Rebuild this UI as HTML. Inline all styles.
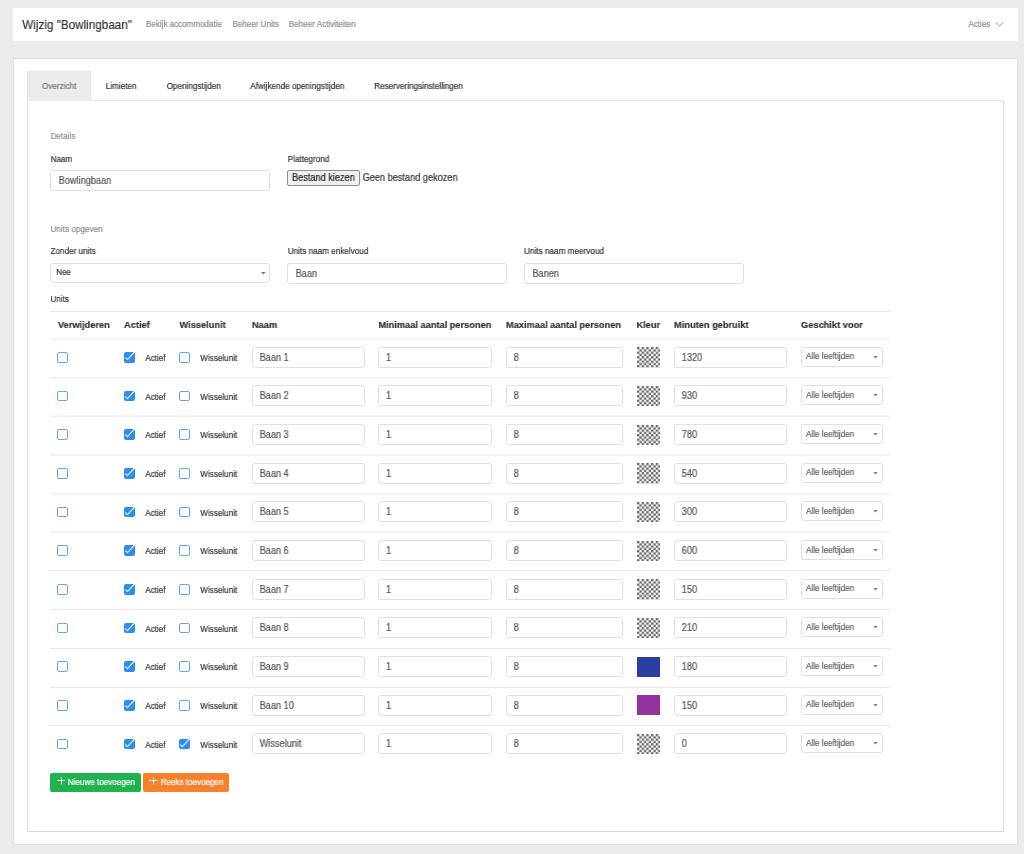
<!DOCTYPE html>
<html><head><meta charset="utf-8"><style>
html,body{margin:0;padding:0}
body{width:1024px;height:854px;overflow:hidden;position:relative;background:#ececec;font-family:"Liberation Sans",sans-serif}
.t{position:absolute;white-space:nowrap;line-height:20px;will-change:transform;transform-origin:0 0;-webkit-text-stroke:0.2px currentColor}
.b{position:absolute}
</style></head><body>
<svg width="0" height="0" style="position:absolute"><defs><pattern id="chk" patternUnits="userSpaceOnUse" width="4.68" height="4.56"><rect width="4.68" height="4.56" fill="#fff"/><rect width="2.34" height="2.28" fill="#666"/><rect x="2.34" y="2.28" width="2.34" height="2.28" fill="#666"/></pattern></defs></svg>
<div class="b" style="left:13.00px;top:8.00px;width:1005.00px;height:33.00px;background:#fff"></div>
<div class="t" style="left:22px;top:15px;padding-left:0.32px;font-size:12.402px;color:#333;transform:scaleX(0.9434);">Wijzig &quot;Bowlingbaan&quot;</div>
<div class="t" style="left:146px;top:14px;padding-left:0.00px;font-size:8.533px;color:#8c8c8c;transform:scaleX(0.9434);">Bekijk accommodatie</div>
<div class="t" style="left:232px;top:14px;padding-left:0.53px;font-size:8.533px;color:#8c8c8c;transform:scaleX(0.9434);">Beheer Units</div>
<div class="t" style="left:288px;top:14px;padding-left:0.85px;font-size:8.586px;color:#8c8c8c;transform:scaleX(0.9434);">Beheer Activiteiten</div>
<div class="t" style="left:968px;top:14px;padding-left:0.53px;font-size:8.48px;color:#8c8c8c;transform:scaleX(0.9434);">Acties</div>
<svg class="b" style="left:995px;top:21px" width="10" height="7" viewBox="0 0 10 7"><path d="M0.9 1.3 L4.6 5.2 L8.3 1.3" fill="none" stroke="#999" stroke-width="1"/></svg>
<div class="b" style="left:13.00px;top:58.00px;width:1005.00px;height:787.00px;background:#fff;border:1px solid #e0e0e0;border-radius:2px;box-sizing:border-box"></div>
<div class="b" style="left:27.00px;top:100.00px;width:977.00px;height:732.00px;border:1px solid #d8dae6;border-top-color:#e3e6ea;box-sizing:border-box"></div>
<div class="b" style="left:27.00px;top:71.00px;width:64.00px;height:30.00px;background:#ececec;border:1px solid #e3e6ea;border-bottom:none;box-sizing:border-box"></div>
<div class="t" style="left:42px;top:76px;padding-left:0.00px;font-size:8.639px;color:#777;transform:scaleX(0.9434);">Overzicht</div>
<div class="t" style="left:105px;top:76px;padding-left:0.85px;font-size:8.639px;color:#333;transform:scaleX(0.9434);">Limieten</div>
<div class="t" style="left:166px;top:76px;padding-left:0.64px;font-size:8.639px;color:#333;transform:scaleX(0.9434);">Openingstijden</div>
<div class="t" style="left:250px;top:76px;padding-left:0.32px;font-size:8.639px;color:#333;transform:scaleX(0.9434);">Afwijkende openingstijden</div>
<div class="t" style="left:374px;top:76px;padding-left:0.21px;font-size:8.639px;color:#333;transform:scaleX(0.9434);">Reserveringsinstellingen</div>
<div class="t" style="left:50px;top:126px;padding-left:0.74px;font-size:8.48px;color:#8c8c8c;transform:scaleX(0.9434);">Details</div>
<div class="t" style="left:50px;top:149px;padding-left:0.74px;font-size:8.533px;color:#333;transform:scaleX(0.9434);">Naam</div>
<div class="t" style="left:287px;top:149px;padding-left:0.85px;font-size:8.586px;color:#333;transform:scaleX(0.9434);">Plattegrond</div>
<div class="b" style="left:50.00px;top:170.00px;width:220.00px;height:21.00px;background:#fff;border:1px solid #dde1e6;border-radius:3px;box-sizing:border-box"></div>
<div class="t" style="left:58px;top:171px;padding-left:0.82px;font-size:9.995px;color:#555;transform:scaleX(0.9174);">Bowlingbaan</div>
<div class="b" style="left:287.00px;top:170.00px;width:73.00px;height:16.00px;background:#efefef;border:1px solid #8f8f8f;border-radius:2px;box-sizing:border-box"></div>
<div class="t" style="left:292px;top:168px;padding-left:0.00px;font-size:10.028px;color:#222;transform:scaleX(0.9174);">Bestand kiezen</div>
<div class="t" style="left:362px;top:168px;padding-left:0.65px;font-size:10.028px;color:#333;transform:scaleX(0.9174);">Geen bestand gekozen</div>
<div class="t" style="left:50px;top:219px;padding-left:0.53px;font-size:8.671px;color:#8c8c8c;transform:scaleX(0.9434);">Units opgeven</div>
<div class="t" style="left:50px;top:241px;padding-left:0.53px;font-size:8.639px;color:#333;transform:scaleX(0.9434);">Zonder units</div>
<div class="t" style="left:287px;top:241px;padding-left:0.85px;font-size:8.639px;color:#333;transform:scaleX(0.9434);">Units naam enkelvoud</div>
<div class="t" style="left:524px;top:241px;padding-left:0.11px;font-size:8.671px;color:#333;transform:scaleX(0.9434);">Units naam meervoud</div>
<div class="b" style="left:50.00px;top:263.00px;width:220.00px;height:20.00px;background:#fff;border:1px solid #dde1e6;border-radius:3px;box-sizing:border-box"></div>
<div class="t" style="left:56px;top:262px;padding-left:0.27px;font-size:8.48px;color:#333;transform:scaleX(0.9434);">Nee</div>
<svg class="b" style="left:261px;top:271.5px" width="5" height="3" viewBox="0 0 5 3"><path d="M0 0 L4.6 0 L2.3 2.5 Z" fill="#777"/></svg>
<div class="b" style="left:287.00px;top:263.00px;width:220.00px;height:21.00px;background:#fff;border:1px solid #dde1e6;border-radius:3px;box-sizing:border-box"></div>
<div class="t" style="left:295px;top:264px;padding-left:0.65px;font-size:10.028px;color:#555;transform:scaleX(0.9174);">Baan</div>
<div class="b" style="left:524.00px;top:263.00px;width:220.00px;height:21.00px;background:#fff;border:1px solid #dde1e6;border-radius:3px;box-sizing:border-box"></div>
<div class="t" style="left:532px;top:264px;padding-left:0.44px;font-size:10.028px;color:#555;transform:scaleX(0.9174);">Banen</div>
<div class="t" style="left:50px;top:289px;padding-left:0.53px;font-size:8.586px;color:#333;transform:scaleX(0.9434);">Units</div>
<div class="b" style="left:50.00px;top:311.00px;width:839.60px;height:1.00px;background:#e4e7eb"></div>
<div class="t" style="left:57px;top:315px;padding-left:0.95px;font-size:9.805px;color:#333;font-weight:bold;transform:scaleX(0.9434);">Verwijderen</div>
<div class="t" style="left:124px;top:315px;padding-left:0.11px;font-size:9.805px;color:#333;font-weight:bold;transform:scaleX(0.9434);">Actief</div>
<div class="t" style="left:179px;top:315px;padding-left:0.53px;font-size:9.805px;color:#333;font-weight:bold;transform:scaleX(0.9434);">Wisselunit</div>
<div class="t" style="left:251px;top:315px;padding-left:0.95px;font-size:9.805px;color:#333;font-weight:bold;transform:scaleX(0.9434);">Naam</div>
<div class="t" style="left:378px;top:315px;padding-left:0.42px;font-size:9.805px;color:#333;font-weight:bold;transform:scaleX(0.9434);">Minimaal aantal personen</div>
<div class="t" style="left:506px;top:315px;padding-left:0.00px;font-size:9.805px;color:#333;font-weight:bold;transform:scaleX(0.9434);">Maximaal aantal personen</div>
<div class="t" style="left:636px;top:315px;padding-left:0.53px;font-size:9.805px;color:#333;font-weight:bold;transform:scaleX(0.9434);">Kleur</div>
<div class="t" style="left:674px;top:315px;padding-left:0.11px;font-size:9.805px;color:#333;font-weight:bold;transform:scaleX(0.9434);">Minuten gebruikt</div>
<div class="t" style="left:801px;top:315px;padding-left:0.11px;font-size:9.805px;color:#333;font-weight:bold;transform:scaleX(0.9434);">Geschikt voor</div>
<div class="b" style="left:50.00px;top:338.00px;width:839.60px;height:1.00px;background:#e4e7eb;opacity:0.50"></div>
<div class="b" style="left:50.00px;top:339.00px;width:839.60px;height:1.00px;background:#e4e7eb;opacity:0.50"></div>
<div class="b" style="left:57.40px;top:352.02px;width:11.00px;height:10.60px;border:1px solid #5ea7f8;border-radius:2px;background:#fff;box-sizing:border-box"></div>
<div class="b" style="left:124.10px;top:352.02px;width:10.70px;height:10.60px;background:#2f8cf5;border-radius:2px"></div>
<svg class="b" style="left:124.1px;top:352.02000000000004px" width="11" height="11" viewBox="0 0 11 11"><path d="M1.3 5.6 L3.5 7.6 L10.2 0.4" fill="none" stroke="#fff" stroke-width="1.05"/></svg>
<div class="t" style="left:145px;top:348px;padding-left:0.21px;font-size:8.607px;color:#333;transform:scaleX(0.9434);">Actief</div>
<div class="b" style="left:179.20px;top:352.02px;width:10.80px;height:10.60px;border:1px solid #5ea7f8;border-radius:2px;background:#fff;box-sizing:border-box"></div>
<div class="t" style="left:200px;top:348px;padding-left:0.32px;font-size:8.607px;color:#333;transform:scaleX(0.9434);">Wisselunit</div>
<div class="b" style="left:252.00px;top:347.00px;width:113.00px;height:21.00px;background:#fff;border:1px solid #dde1e6;border-radius:3px;box-sizing:border-box"></div>
<div class="t" style="left:259px;top:348px;padding-left:0.65px;font-size:10.028px;color:#555;transform:scaleX(0.9174);">Baan 1</div>
<div class="b" style="left:378.00px;top:347.00px;width:114.00px;height:21.00px;background:#fff;border:1px solid #dde1e6;border-radius:3px;box-sizing:border-box"></div>
<div class="t" style="left:386px;top:348px;padding-left:0.11px;font-size:10.028px;color:#555;transform:scaleX(0.9174);">1</div>
<div class="b" style="left:506.00px;top:347.00px;width:117.00px;height:21.00px;background:#fff;border:1px solid #dde1e6;border-radius:3px;box-sizing:border-box"></div>
<div class="t" style="left:513px;top:348px;padding-left:0.76px;font-size:10.028px;color:#555;transform:scaleX(0.9174);">8</div>
<svg class="b" style="left:637px;top:347.32px" width="23.4" height="20.5"><rect width="23.4" height="20.5" fill="url(#chk)"/></svg>
<div class="b" style="left:674.00px;top:347.00px;width:113.00px;height:21.00px;background:#fff;border:1px solid #dde1e6;border-radius:3px;box-sizing:border-box"></div>
<div class="t" style="left:681px;top:348px;padding-left:0.87px;font-size:10.028px;color:#555;transform:scaleX(0.9174);">1320</div>
<div class="b" style="left:801.00px;top:347.00px;width:82.00px;height:20.00px;background:#fff;border:1px solid #dde1e6;border-radius:3px;box-sizing:border-box"></div>
<div class="t" style="left:806px;top:346px;padding-left:0.00px;font-size:8.618px;color:#606060;transform:scaleX(0.9434);">Alle leeftijden</div>
<svg class="b" style="left:873px;top:355.72px" width="5" height="3" viewBox="0 0 5 3"><path d="M0.2 0 L4.8 0 L2.5 2.5 Z" fill="#808080"/></svg>
<div class="b" style="left:50.00px;top:377.00px;width:839.60px;height:1.00px;background:#e4e7eb;opacity:0.55"></div>
<div class="b" style="left:50.00px;top:378.00px;width:839.60px;height:1.00px;background:#e4e7eb;opacity:0.45"></div>
<div class="b" style="left:57.40px;top:390.68px;width:11.00px;height:10.60px;border:1px solid #5ea7f8;border-radius:2px;background:#fff;box-sizing:border-box"></div>
<div class="b" style="left:124.10px;top:390.68px;width:10.70px;height:10.60px;background:#2f8cf5;border-radius:2px"></div>
<svg class="b" style="left:124.1px;top:390.67600000000004px" width="11" height="11" viewBox="0 0 11 11"><path d="M1.3 5.6 L3.5 7.6 L10.2 0.4" fill="none" stroke="#fff" stroke-width="1.05"/></svg>
<div class="t" style="left:145px;top:387px;padding-left:0.21px;font-size:8.607px;color:#333;transform:scaleX(0.9434);">Actief</div>
<div class="b" style="left:179.20px;top:390.68px;width:10.80px;height:10.60px;border:1px solid #5ea7f8;border-radius:2px;background:#fff;box-sizing:border-box"></div>
<div class="t" style="left:200px;top:387px;padding-left:0.32px;font-size:8.607px;color:#333;transform:scaleX(0.9434);">Wisselunit</div>
<div class="b" style="left:252.00px;top:385.00px;width:113.00px;height:21.00px;background:#fff;border:1px solid #dde1e6;border-radius:3px;box-sizing:border-box"></div>
<div class="t" style="left:259px;top:386px;padding-left:0.65px;font-size:10.028px;color:#555;transform:scaleX(0.9174);">Baan 2</div>
<div class="b" style="left:378.00px;top:385.00px;width:114.00px;height:21.00px;background:#fff;border:1px solid #dde1e6;border-radius:3px;box-sizing:border-box"></div>
<div class="t" style="left:386px;top:386px;padding-left:0.11px;font-size:10.028px;color:#555;transform:scaleX(0.9174);">1</div>
<div class="b" style="left:506.00px;top:385.00px;width:117.00px;height:21.00px;background:#fff;border:1px solid #dde1e6;border-radius:3px;box-sizing:border-box"></div>
<div class="t" style="left:513px;top:386px;padding-left:0.76px;font-size:10.028px;color:#555;transform:scaleX(0.9174);">8</div>
<svg class="b" style="left:637px;top:385.98px" width="23.4" height="20.5"><rect width="23.4" height="20.5" fill="url(#chk)"/></svg>
<div class="b" style="left:674.00px;top:385.00px;width:113.00px;height:21.00px;background:#fff;border:1px solid #dde1e6;border-radius:3px;box-sizing:border-box"></div>
<div class="t" style="left:681px;top:386px;padding-left:0.87px;font-size:10.028px;color:#555;transform:scaleX(0.9174);">930</div>
<div class="b" style="left:801.00px;top:385.00px;width:82.00px;height:20.00px;background:#fff;border:1px solid #dde1e6;border-radius:3px;box-sizing:border-box"></div>
<div class="t" style="left:806px;top:385px;padding-left:0.00px;font-size:8.618px;color:#606060;transform:scaleX(0.9434);">Alle leeftijden</div>
<svg class="b" style="left:873px;top:394.38px" width="5" height="3" viewBox="0 0 5 3"><path d="M0.2 0 L4.8 0 L2.5 2.5 Z" fill="#808080"/></svg>
<div class="b" style="left:50.00px;top:415.00px;width:839.60px;height:1.00px;background:#e4e7eb;opacity:0.37"></div>
<div class="b" style="left:50.00px;top:416.00px;width:839.60px;height:1.00px;background:#e4e7eb;opacity:0.63"></div>
<div class="b" style="left:57.40px;top:429.33px;width:11.00px;height:10.60px;border:1px solid #5ea7f8;border-radius:2px;background:#fff;box-sizing:border-box"></div>
<div class="b" style="left:124.10px;top:429.33px;width:10.70px;height:10.60px;background:#2f8cf5;border-radius:2px"></div>
<svg class="b" style="left:124.1px;top:429.33200000000005px" width="11" height="11" viewBox="0 0 11 11"><path d="M1.3 5.6 L3.5 7.6 L10.2 0.4" fill="none" stroke="#fff" stroke-width="1.05"/></svg>
<div class="t" style="left:145px;top:425px;padding-left:0.21px;font-size:8.607px;color:#333;transform:scaleX(0.9434);">Actief</div>
<div class="b" style="left:179.20px;top:429.33px;width:10.80px;height:10.60px;border:1px solid #5ea7f8;border-radius:2px;background:#fff;box-sizing:border-box"></div>
<div class="t" style="left:200px;top:425px;padding-left:0.32px;font-size:8.607px;color:#333;transform:scaleX(0.9434);">Wisselunit</div>
<div class="b" style="left:252.00px;top:424.00px;width:113.00px;height:21.00px;background:#fff;border:1px solid #dde1e6;border-radius:3px;box-sizing:border-box"></div>
<div class="t" style="left:259px;top:425px;padding-left:0.65px;font-size:10.028px;color:#555;transform:scaleX(0.9174);">Baan 3</div>
<div class="b" style="left:378.00px;top:424.00px;width:114.00px;height:21.00px;background:#fff;border:1px solid #dde1e6;border-radius:3px;box-sizing:border-box"></div>
<div class="t" style="left:386px;top:425px;padding-left:0.11px;font-size:10.028px;color:#555;transform:scaleX(0.9174);">1</div>
<div class="b" style="left:506.00px;top:424.00px;width:117.00px;height:21.00px;background:#fff;border:1px solid #dde1e6;border-radius:3px;box-sizing:border-box"></div>
<div class="t" style="left:513px;top:425px;padding-left:0.76px;font-size:10.028px;color:#555;transform:scaleX(0.9174);">8</div>
<svg class="b" style="left:637px;top:424.63px" width="23.4" height="20.5"><rect width="23.4" height="20.5" fill="url(#chk)"/></svg>
<div class="b" style="left:674.00px;top:424.00px;width:113.00px;height:21.00px;background:#fff;border:1px solid #dde1e6;border-radius:3px;box-sizing:border-box"></div>
<div class="t" style="left:681px;top:425px;padding-left:0.87px;font-size:10.028px;color:#555;transform:scaleX(0.9174);">780</div>
<div class="b" style="left:801.00px;top:424.00px;width:82.00px;height:20.00px;background:#fff;border:1px solid #dde1e6;border-radius:3px;box-sizing:border-box"></div>
<div class="t" style="left:806px;top:424px;padding-left:0.00px;font-size:8.618px;color:#606060;transform:scaleX(0.9434);">Alle leeftijden</div>
<svg class="b" style="left:873px;top:433.03px" width="5" height="3" viewBox="0 0 5 3"><path d="M0.2 0 L4.8 0 L2.5 2.5 Z" fill="#808080"/></svg>
<div class="b" style="left:50.00px;top:454.00px;width:839.60px;height:1.00px;background:#e4e7eb;opacity:0.55"></div>
<div class="b" style="left:50.00px;top:455.00px;width:839.60px;height:1.00px;background:#e4e7eb;opacity:0.45"></div>
<div class="b" style="left:57.40px;top:467.99px;width:11.00px;height:10.60px;border:1px solid #5ea7f8;border-radius:2px;background:#fff;box-sizing:border-box"></div>
<div class="b" style="left:124.10px;top:467.99px;width:10.70px;height:10.60px;background:#2f8cf5;border-radius:2px"></div>
<svg class="b" style="left:124.1px;top:467.98800000000006px" width="11" height="11" viewBox="0 0 11 11"><path d="M1.3 5.6 L3.5 7.6 L10.2 0.4" fill="none" stroke="#fff" stroke-width="1.05"/></svg>
<div class="t" style="left:145px;top:464px;padding-left:0.21px;font-size:8.607px;color:#333;transform:scaleX(0.9434);">Actief</div>
<div class="b" style="left:179.20px;top:467.99px;width:10.80px;height:10.60px;border:1px solid #5ea7f8;border-radius:2px;background:#fff;box-sizing:border-box"></div>
<div class="t" style="left:200px;top:464px;padding-left:0.32px;font-size:8.607px;color:#333;transform:scaleX(0.9434);">Wisselunit</div>
<div class="b" style="left:252.00px;top:463.00px;width:113.00px;height:21.00px;background:#fff;border:1px solid #dde1e6;border-radius:3px;box-sizing:border-box"></div>
<div class="t" style="left:259px;top:464px;padding-left:0.65px;font-size:10.028px;color:#555;transform:scaleX(0.9174);">Baan 4</div>
<div class="b" style="left:378.00px;top:463.00px;width:114.00px;height:21.00px;background:#fff;border:1px solid #dde1e6;border-radius:3px;box-sizing:border-box"></div>
<div class="t" style="left:386px;top:464px;padding-left:0.11px;font-size:10.028px;color:#555;transform:scaleX(0.9174);">1</div>
<div class="b" style="left:506.00px;top:463.00px;width:117.00px;height:21.00px;background:#fff;border:1px solid #dde1e6;border-radius:3px;box-sizing:border-box"></div>
<div class="t" style="left:513px;top:464px;padding-left:0.76px;font-size:10.028px;color:#555;transform:scaleX(0.9174);">8</div>
<svg class="b" style="left:637px;top:463.29px" width="23.4" height="20.5"><rect width="23.4" height="20.5" fill="url(#chk)"/></svg>
<div class="b" style="left:674.00px;top:463.00px;width:113.00px;height:21.00px;background:#fff;border:1px solid #dde1e6;border-radius:3px;box-sizing:border-box"></div>
<div class="t" style="left:681px;top:464px;padding-left:0.87px;font-size:10.028px;color:#555;transform:scaleX(0.9174);">540</div>
<div class="b" style="left:801.00px;top:463.00px;width:82.00px;height:20.00px;background:#fff;border:1px solid #dde1e6;border-radius:3px;box-sizing:border-box"></div>
<div class="t" style="left:806px;top:462px;padding-left:0.00px;font-size:8.618px;color:#606060;transform:scaleX(0.9434);">Alle leeftijden</div>
<svg class="b" style="left:873px;top:471.69px" width="5" height="3" viewBox="0 0 5 3"><path d="M0.2 0 L4.8 0 L2.5 2.5 Z" fill="#808080"/></svg>
<div class="b" style="left:50.00px;top:493.00px;width:839.60px;height:1.00px;background:#e4e7eb;opacity:0.66"></div>
<div class="b" style="left:50.00px;top:494.00px;width:839.60px;height:1.00px;background:#e4e7eb;opacity:0.34"></div>
<div class="b" style="left:57.40px;top:506.64px;width:11.00px;height:10.60px;border:1px solid #5ea7f8;border-radius:2px;background:#fff;box-sizing:border-box"></div>
<div class="b" style="left:124.10px;top:506.64px;width:10.70px;height:10.60px;background:#2f8cf5;border-radius:2px"></div>
<svg class="b" style="left:124.1px;top:506.644px" width="11" height="11" viewBox="0 0 11 11"><path d="M1.3 5.6 L3.5 7.6 L10.2 0.4" fill="none" stroke="#fff" stroke-width="1.05"/></svg>
<div class="t" style="left:145px;top:503px;padding-left:0.21px;font-size:8.607px;color:#333;transform:scaleX(0.9434);">Actief</div>
<div class="b" style="left:179.20px;top:506.64px;width:10.80px;height:10.60px;border:1px solid #5ea7f8;border-radius:2px;background:#fff;box-sizing:border-box"></div>
<div class="t" style="left:200px;top:503px;padding-left:0.32px;font-size:8.607px;color:#333;transform:scaleX(0.9434);">Wisselunit</div>
<div class="b" style="left:252.00px;top:501.00px;width:113.00px;height:21.00px;background:#fff;border:1px solid #dde1e6;border-radius:3px;box-sizing:border-box"></div>
<div class="t" style="left:259px;top:502px;padding-left:0.65px;font-size:10.028px;color:#555;transform:scaleX(0.9174);">Baan 5</div>
<div class="b" style="left:378.00px;top:501.00px;width:114.00px;height:21.00px;background:#fff;border:1px solid #dde1e6;border-radius:3px;box-sizing:border-box"></div>
<div class="t" style="left:386px;top:502px;padding-left:0.11px;font-size:10.028px;color:#555;transform:scaleX(0.9174);">1</div>
<div class="b" style="left:506.00px;top:501.00px;width:117.00px;height:21.00px;background:#fff;border:1px solid #dde1e6;border-radius:3px;box-sizing:border-box"></div>
<div class="t" style="left:513px;top:502px;padding-left:0.76px;font-size:10.028px;color:#555;transform:scaleX(0.9174);">8</div>
<svg class="b" style="left:637px;top:501.94px" width="23.4" height="20.5"><rect width="23.4" height="20.5" fill="url(#chk)"/></svg>
<div class="b" style="left:674.00px;top:501.00px;width:113.00px;height:21.00px;background:#fff;border:1px solid #dde1e6;border-radius:3px;box-sizing:border-box"></div>
<div class="t" style="left:681px;top:502px;padding-left:0.87px;font-size:10.028px;color:#555;transform:scaleX(0.9174);">300</div>
<div class="b" style="left:801.00px;top:501.00px;width:82.00px;height:20.00px;background:#fff;border:1px solid #dde1e6;border-radius:3px;box-sizing:border-box"></div>
<div class="t" style="left:806px;top:501px;padding-left:0.00px;font-size:8.618px;color:#606060;transform:scaleX(0.9434);">Alle leeftijden</div>
<svg class="b" style="left:873px;top:510.34px" width="5" height="3" viewBox="0 0 5 3"><path d="M0.2 0 L4.8 0 L2.5 2.5 Z" fill="#808080"/></svg>
<div class="b" style="left:50.00px;top:531.00px;width:839.60px;height:1.00px;background:#e4e7eb;opacity:0.40"></div>
<div class="b" style="left:50.00px;top:532.00px;width:839.60px;height:1.00px;background:#e4e7eb;opacity:0.60"></div>
<div class="b" style="left:57.40px;top:545.30px;width:11.00px;height:10.60px;border:1px solid #5ea7f8;border-radius:2px;background:#fff;box-sizing:border-box"></div>
<div class="b" style="left:124.10px;top:545.30px;width:10.70px;height:10.60px;background:#2f8cf5;border-radius:2px"></div>
<svg class="b" style="left:124.1px;top:545.3000000000001px" width="11" height="11" viewBox="0 0 11 11"><path d="M1.3 5.6 L3.5 7.6 L10.2 0.4" fill="none" stroke="#fff" stroke-width="1.05"/></svg>
<div class="t" style="left:145px;top:541px;padding-left:0.21px;font-size:8.607px;color:#333;transform:scaleX(0.9434);">Actief</div>
<div class="b" style="left:179.20px;top:545.30px;width:10.80px;height:10.60px;border:1px solid #5ea7f8;border-radius:2px;background:#fff;box-sizing:border-box"></div>
<div class="t" style="left:200px;top:541px;padding-left:0.32px;font-size:8.607px;color:#333;transform:scaleX(0.9434);">Wisselunit</div>
<div class="b" style="left:252.00px;top:540.00px;width:113.00px;height:21.00px;background:#fff;border:1px solid #dde1e6;border-radius:3px;box-sizing:border-box"></div>
<div class="t" style="left:259px;top:541px;padding-left:0.65px;font-size:10.028px;color:#555;transform:scaleX(0.9174);">Baan 6</div>
<div class="b" style="left:378.00px;top:540.00px;width:114.00px;height:21.00px;background:#fff;border:1px solid #dde1e6;border-radius:3px;box-sizing:border-box"></div>
<div class="t" style="left:386px;top:541px;padding-left:0.11px;font-size:10.028px;color:#555;transform:scaleX(0.9174);">1</div>
<div class="b" style="left:506.00px;top:540.00px;width:117.00px;height:21.00px;background:#fff;border:1px solid #dde1e6;border-radius:3px;box-sizing:border-box"></div>
<div class="t" style="left:513px;top:541px;padding-left:0.76px;font-size:10.028px;color:#555;transform:scaleX(0.9174);">8</div>
<svg class="b" style="left:637px;top:540.60px" width="23.4" height="20.5"><rect width="23.4" height="20.5" fill="url(#chk)"/></svg>
<div class="b" style="left:674.00px;top:540.00px;width:113.00px;height:21.00px;background:#fff;border:1px solid #dde1e6;border-radius:3px;box-sizing:border-box"></div>
<div class="t" style="left:681px;top:541px;padding-left:0.87px;font-size:10.028px;color:#555;transform:scaleX(0.9174);">600</div>
<div class="b" style="left:801.00px;top:540.00px;width:82.00px;height:20.00px;background:#fff;border:1px solid #dde1e6;border-radius:3px;box-sizing:border-box"></div>
<div class="t" style="left:806px;top:540px;padding-left:0.00px;font-size:8.618px;color:#606060;transform:scaleX(0.9434);">Alle leeftijden</div>
<svg class="b" style="left:873px;top:549.00px" width="5" height="3" viewBox="0 0 5 3"><path d="M0.2 0 L4.8 0 L2.5 2.5 Z" fill="#808080"/></svg>
<div class="b" style="left:50.00px;top:570.00px;width:839.60px;height:1.00px;background:#e4e7eb"></div>
<div class="b" style="left:57.40px;top:583.96px;width:11.00px;height:10.60px;border:1px solid #5ea7f8;border-radius:2px;background:#fff;box-sizing:border-box"></div>
<div class="b" style="left:124.10px;top:583.96px;width:10.70px;height:10.60px;background:#2f8cf5;border-radius:2px"></div>
<svg class="b" style="left:124.1px;top:583.956px" width="11" height="11" viewBox="0 0 11 11"><path d="M1.3 5.6 L3.5 7.6 L10.2 0.4" fill="none" stroke="#fff" stroke-width="1.05"/></svg>
<div class="t" style="left:145px;top:580px;padding-left:0.21px;font-size:8.607px;color:#333;transform:scaleX(0.9434);">Actief</div>
<div class="b" style="left:179.20px;top:583.96px;width:10.80px;height:10.60px;border:1px solid #5ea7f8;border-radius:2px;background:#fff;box-sizing:border-box"></div>
<div class="t" style="left:200px;top:580px;padding-left:0.32px;font-size:8.607px;color:#333;transform:scaleX(0.9434);">Wisselunit</div>
<div class="b" style="left:252.00px;top:579.00px;width:113.00px;height:21.00px;background:#fff;border:1px solid #dde1e6;border-radius:3px;box-sizing:border-box"></div>
<div class="t" style="left:259px;top:580px;padding-left:0.65px;font-size:10.028px;color:#555;transform:scaleX(0.9174);">Baan 7</div>
<div class="b" style="left:378.00px;top:579.00px;width:114.00px;height:21.00px;background:#fff;border:1px solid #dde1e6;border-radius:3px;box-sizing:border-box"></div>
<div class="t" style="left:386px;top:580px;padding-left:0.11px;font-size:10.028px;color:#555;transform:scaleX(0.9174);">1</div>
<div class="b" style="left:506.00px;top:579.00px;width:117.00px;height:21.00px;background:#fff;border:1px solid #dde1e6;border-radius:3px;box-sizing:border-box"></div>
<div class="t" style="left:513px;top:580px;padding-left:0.76px;font-size:10.028px;color:#555;transform:scaleX(0.9174);">8</div>
<svg class="b" style="left:637px;top:579.26px" width="23.4" height="20.5"><rect width="23.4" height="20.5" fill="url(#chk)"/></svg>
<div class="b" style="left:674.00px;top:579.00px;width:113.00px;height:21.00px;background:#fff;border:1px solid #dde1e6;border-radius:3px;box-sizing:border-box"></div>
<div class="t" style="left:681px;top:580px;padding-left:0.87px;font-size:10.028px;color:#555;transform:scaleX(0.9174);">150</div>
<div class="b" style="left:801.00px;top:579.00px;width:82.00px;height:20.00px;background:#fff;border:1px solid #dde1e6;border-radius:3px;box-sizing:border-box"></div>
<div class="t" style="left:806px;top:578px;padding-left:0.00px;font-size:8.618px;color:#606060;transform:scaleX(0.9434);">Alle leeftijden</div>
<svg class="b" style="left:873px;top:587.66px" width="5" height="3" viewBox="0 0 5 3"><path d="M0.2 0 L4.8 0 L2.5 2.5 Z" fill="#808080"/></svg>
<div class="b" style="left:50.00px;top:609.00px;width:839.60px;height:1.00px;background:#e4e7eb"></div>
<div class="b" style="left:57.40px;top:622.61px;width:11.00px;height:10.60px;border:1px solid #5ea7f8;border-radius:2px;background:#fff;box-sizing:border-box"></div>
<div class="b" style="left:124.10px;top:622.61px;width:10.70px;height:10.60px;background:#2f8cf5;border-radius:2px"></div>
<svg class="b" style="left:124.1px;top:622.612px" width="11" height="11" viewBox="0 0 11 11"><path d="M1.3 5.6 L3.5 7.6 L10.2 0.4" fill="none" stroke="#fff" stroke-width="1.05"/></svg>
<div class="t" style="left:145px;top:619px;padding-left:0.21px;font-size:8.607px;color:#333;transform:scaleX(0.9434);">Actief</div>
<div class="b" style="left:179.20px;top:622.61px;width:10.80px;height:10.60px;border:1px solid #5ea7f8;border-radius:2px;background:#fff;box-sizing:border-box"></div>
<div class="t" style="left:200px;top:619px;padding-left:0.32px;font-size:8.607px;color:#333;transform:scaleX(0.9434);">Wisselunit</div>
<div class="b" style="left:252.00px;top:617.00px;width:113.00px;height:21.00px;background:#fff;border:1px solid #dde1e6;border-radius:3px;box-sizing:border-box"></div>
<div class="t" style="left:259px;top:618px;padding-left:0.65px;font-size:10.028px;color:#555;transform:scaleX(0.9174);">Baan 8</div>
<div class="b" style="left:378.00px;top:617.00px;width:114.00px;height:21.00px;background:#fff;border:1px solid #dde1e6;border-radius:3px;box-sizing:border-box"></div>
<div class="t" style="left:386px;top:618px;padding-left:0.11px;font-size:10.028px;color:#555;transform:scaleX(0.9174);">1</div>
<div class="b" style="left:506.00px;top:617.00px;width:117.00px;height:21.00px;background:#fff;border:1px solid #dde1e6;border-radius:3px;box-sizing:border-box"></div>
<div class="t" style="left:513px;top:618px;padding-left:0.76px;font-size:10.028px;color:#555;transform:scaleX(0.9174);">8</div>
<svg class="b" style="left:637px;top:617.91px" width="23.4" height="20.5"><rect width="23.4" height="20.5" fill="url(#chk)"/></svg>
<div class="b" style="left:674.00px;top:617.00px;width:113.00px;height:21.00px;background:#fff;border:1px solid #dde1e6;border-radius:3px;box-sizing:border-box"></div>
<div class="t" style="left:681px;top:618px;padding-left:0.87px;font-size:10.028px;color:#555;transform:scaleX(0.9174);">210</div>
<div class="b" style="left:801.00px;top:617.00px;width:82.00px;height:20.00px;background:#fff;border:1px solid #dde1e6;border-radius:3px;box-sizing:border-box"></div>
<div class="t" style="left:806px;top:617px;padding-left:0.00px;font-size:8.618px;color:#606060;transform:scaleX(0.9434);">Alle leeftijden</div>
<svg class="b" style="left:873px;top:626.31px" width="5" height="3" viewBox="0 0 5 3"><path d="M0.2 0 L4.8 0 L2.5 2.5 Z" fill="#808080"/></svg>
<div class="b" style="left:50.00px;top:648.00px;width:839.60px;height:1.00px;background:#e4e7eb"></div>
<div class="b" style="left:57.40px;top:661.27px;width:11.00px;height:10.60px;border:1px solid #5ea7f8;border-radius:2px;background:#fff;box-sizing:border-box"></div>
<div class="b" style="left:124.10px;top:661.27px;width:10.70px;height:10.60px;background:#2f8cf5;border-radius:2px"></div>
<svg class="b" style="left:124.1px;top:661.268px" width="11" height="11" viewBox="0 0 11 11"><path d="M1.3 5.6 L3.5 7.6 L10.2 0.4" fill="none" stroke="#fff" stroke-width="1.05"/></svg>
<div class="t" style="left:145px;top:657px;padding-left:0.21px;font-size:8.607px;color:#333;transform:scaleX(0.9434);">Actief</div>
<div class="b" style="left:179.20px;top:661.27px;width:10.80px;height:10.60px;border:1px solid #5ea7f8;border-radius:2px;background:#fff;box-sizing:border-box"></div>
<div class="t" style="left:200px;top:657px;padding-left:0.32px;font-size:8.607px;color:#333;transform:scaleX(0.9434);">Wisselunit</div>
<div class="b" style="left:252.00px;top:656.00px;width:113.00px;height:21.00px;background:#fff;border:1px solid #dde1e6;border-radius:3px;box-sizing:border-box"></div>
<div class="t" style="left:259px;top:657px;padding-left:0.65px;font-size:10.028px;color:#555;transform:scaleX(0.9174);">Baan 9</div>
<div class="b" style="left:378.00px;top:656.00px;width:114.00px;height:21.00px;background:#fff;border:1px solid #dde1e6;border-radius:3px;box-sizing:border-box"></div>
<div class="t" style="left:386px;top:657px;padding-left:0.11px;font-size:10.028px;color:#555;transform:scaleX(0.9174);">1</div>
<div class="b" style="left:506.00px;top:656.00px;width:117.00px;height:21.00px;background:#fff;border:1px solid #dde1e6;border-radius:3px;box-sizing:border-box"></div>
<div class="t" style="left:513px;top:657px;padding-left:0.76px;font-size:10.028px;color:#555;transform:scaleX(0.9174);">8</div>
<div class="b" style="left:637.20px;top:656.77px;width:22.40px;height:20.00px;background:#2b3fa0"></div>
<div class="b" style="left:674.00px;top:656.00px;width:113.00px;height:21.00px;background:#fff;border:1px solid #dde1e6;border-radius:3px;box-sizing:border-box"></div>
<div class="t" style="left:681px;top:657px;padding-left:0.87px;font-size:10.028px;color:#555;transform:scaleX(0.9174);">180</div>
<div class="b" style="left:801.00px;top:656.00px;width:82.00px;height:20.00px;background:#fff;border:1px solid #dde1e6;border-radius:3px;box-sizing:border-box"></div>
<div class="t" style="left:806px;top:656px;padding-left:0.00px;font-size:8.618px;color:#606060;transform:scaleX(0.9434);">Alle leeftijden</div>
<svg class="b" style="left:873px;top:664.97px" width="5" height="3" viewBox="0 0 5 3"><path d="M0.2 0 L4.8 0 L2.5 2.5 Z" fill="#808080"/></svg>
<div class="b" style="left:50.00px;top:686.00px;width:839.60px;height:1.00px;background:#e4e7eb;opacity:0.20"></div>
<div class="b" style="left:50.00px;top:687.00px;width:839.60px;height:1.00px;background:#e4e7eb;opacity:0.80"></div>
<div class="b" style="left:57.40px;top:699.92px;width:11.00px;height:10.60px;border:1px solid #5ea7f8;border-radius:2px;background:#fff;box-sizing:border-box"></div>
<div class="b" style="left:124.10px;top:699.92px;width:10.70px;height:10.60px;background:#2f8cf5;border-radius:2px"></div>
<svg class="b" style="left:124.1px;top:699.9240000000001px" width="11" height="11" viewBox="0 0 11 11"><path d="M1.3 5.6 L3.5 7.6 L10.2 0.4" fill="none" stroke="#fff" stroke-width="1.05"/></svg>
<div class="t" style="left:145px;top:696px;padding-left:0.21px;font-size:8.607px;color:#333;transform:scaleX(0.9434);">Actief</div>
<div class="b" style="left:179.20px;top:699.92px;width:10.80px;height:10.60px;border:1px solid #5ea7f8;border-radius:2px;background:#fff;box-sizing:border-box"></div>
<div class="t" style="left:200px;top:696px;padding-left:0.32px;font-size:8.607px;color:#333;transform:scaleX(0.9434);">Wisselunit</div>
<div class="b" style="left:252.00px;top:695.00px;width:113.00px;height:21.00px;background:#fff;border:1px solid #dde1e6;border-radius:3px;box-sizing:border-box"></div>
<div class="t" style="left:259px;top:696px;padding-left:0.65px;font-size:10.028px;color:#555;transform:scaleX(0.9174);">Baan 10</div>
<div class="b" style="left:378.00px;top:695.00px;width:114.00px;height:21.00px;background:#fff;border:1px solid #dde1e6;border-radius:3px;box-sizing:border-box"></div>
<div class="t" style="left:386px;top:696px;padding-left:0.11px;font-size:10.028px;color:#555;transform:scaleX(0.9174);">1</div>
<div class="b" style="left:506.00px;top:695.00px;width:117.00px;height:21.00px;background:#fff;border:1px solid #dde1e6;border-radius:3px;box-sizing:border-box"></div>
<div class="t" style="left:513px;top:696px;padding-left:0.76px;font-size:10.028px;color:#555;transform:scaleX(0.9174);">8</div>
<div class="b" style="left:637.20px;top:695.42px;width:22.40px;height:20.00px;background:#95319d"></div>
<div class="b" style="left:674.00px;top:695.00px;width:113.00px;height:21.00px;background:#fff;border:1px solid #dde1e6;border-radius:3px;box-sizing:border-box"></div>
<div class="t" style="left:681px;top:696px;padding-left:0.87px;font-size:10.028px;color:#555;transform:scaleX(0.9174);">150</div>
<div class="b" style="left:801.00px;top:695.00px;width:82.00px;height:20.00px;background:#fff;border:1px solid #dde1e6;border-radius:3px;box-sizing:border-box"></div>
<div class="t" style="left:806px;top:694px;padding-left:0.00px;font-size:8.618px;color:#606060;transform:scaleX(0.9434);">Alle leeftijden</div>
<svg class="b" style="left:873px;top:703.62px" width="5" height="3" viewBox="0 0 5 3"><path d="M0.2 0 L4.8 0 L2.5 2.5 Z" fill="#808080"/></svg>
<div class="b" style="left:50.00px;top:725.00px;width:839.60px;height:1.00px;background:#e4e7eb"></div>
<div class="b" style="left:57.40px;top:738.58px;width:11.00px;height:10.60px;border:1px solid #5ea7f8;border-radius:2px;background:#fff;box-sizing:border-box"></div>
<div class="b" style="left:124.10px;top:738.58px;width:10.70px;height:10.60px;background:#2f8cf5;border-radius:2px"></div>
<svg class="b" style="left:124.1px;top:738.58px" width="11" height="11" viewBox="0 0 11 11"><path d="M1.3 5.6 L3.5 7.6 L10.2 0.4" fill="none" stroke="#fff" stroke-width="1.05"/></svg>
<div class="t" style="left:145px;top:735px;padding-left:0.21px;font-size:8.607px;color:#333;transform:scaleX(0.9434);">Actief</div>
<div class="b" style="left:179.20px;top:738.58px;width:10.80px;height:10.60px;background:#2f8cf5;border-radius:2px"></div>
<svg class="b" style="left:179.2px;top:738.58px" width="11" height="11" viewBox="0 0 11 11"><path d="M1.3 5.6 L3.5 7.6 L10.2 0.4" fill="none" stroke="#fff" stroke-width="1.05"/></svg>
<div class="t" style="left:200px;top:735px;padding-left:0.32px;font-size:8.607px;color:#333;transform:scaleX(0.9434);">Wisselunit</div>
<div class="b" style="left:252.00px;top:733.00px;width:113.00px;height:21.00px;background:#fff;border:1px solid #dde1e6;border-radius:3px;box-sizing:border-box"></div>
<div class="t" style="left:259px;top:734px;padding-left:0.65px;font-size:10.028px;color:#555;transform:scaleX(0.9174);">Wisselunit</div>
<div class="b" style="left:378.00px;top:733.00px;width:114.00px;height:21.00px;background:#fff;border:1px solid #dde1e6;border-radius:3px;box-sizing:border-box"></div>
<div class="t" style="left:386px;top:734px;padding-left:0.11px;font-size:10.028px;color:#555;transform:scaleX(0.9174);">1</div>
<div class="b" style="left:506.00px;top:733.00px;width:117.00px;height:21.00px;background:#fff;border:1px solid #dde1e6;border-radius:3px;box-sizing:border-box"></div>
<div class="t" style="left:513px;top:734px;padding-left:0.76px;font-size:10.028px;color:#555;transform:scaleX(0.9174);">8</div>
<svg class="b" style="left:637px;top:733.88px" width="23.4" height="20.5"><rect width="23.4" height="20.5" fill="url(#chk)"/></svg>
<div class="b" style="left:674.00px;top:733.00px;width:113.00px;height:21.00px;background:#fff;border:1px solid #dde1e6;border-radius:3px;box-sizing:border-box"></div>
<div class="t" style="left:681px;top:734px;padding-left:0.87px;font-size:10.028px;color:#555;transform:scaleX(0.9174);">0</div>
<div class="b" style="left:801.00px;top:733.00px;width:82.00px;height:20.00px;background:#fff;border:1px solid #dde1e6;border-radius:3px;box-sizing:border-box"></div>
<div class="t" style="left:806px;top:733px;padding-left:0.00px;font-size:8.618px;color:#606060;transform:scaleX(0.9434);">Alle leeftijden</div>
<svg class="b" style="left:873px;top:742.28px" width="5" height="3" viewBox="0 0 5 3"><path d="M0.2 0 L4.8 0 L2.5 2.5 Z" fill="#808080"/></svg>
<div class="b" style="left:50.00px;top:773.00px;width:91.00px;height:19.00px;background:#1fb350;border-radius:2px"></div>
<div class="b" style="left:143.00px;top:773.00px;width:86.00px;height:19.00px;background:#f9812c;border-radius:2px"></div>
<div class="b" style="left:61.00px;top:777.00px;width:1.00px;height:8.00px;background:rgba(255,255,255,0.92)"></div>
<div class="b" style="left:57.00px;top:780.00px;width:4.00px;height:1.00px;background:rgba(255,255,255,0.92)"></div>
<div class="b" style="left:62.00px;top:780.00px;width:3.00px;height:1.00px;background:rgba(255,255,255,0.92)"></div>
<div class="b" style="left:153.00px;top:777.00px;width:1.00px;height:8.00px;background:rgba(255,255,255,0.92)"></div>
<div class="b" style="left:149.00px;top:780.00px;width:4.00px;height:1.00px;background:rgba(255,255,255,0.92)"></div>
<div class="b" style="left:154.00px;top:780.00px;width:4.00px;height:1.00px;background:rgba(255,255,255,0.92)"></div>
<div class="t" style="left:67px;top:772px;padding-left:0.85px;font-size:8.586px;color:#fff;transform:scaleX(0.9434);">Nieuwe toevoegen</div>
<div class="t" style="left:160px;top:772px;padding-left:0.64px;font-size:8.565px;color:#fff;transform:scaleX(0.9434);">Reeks toevoegen</div>
</body></html>
